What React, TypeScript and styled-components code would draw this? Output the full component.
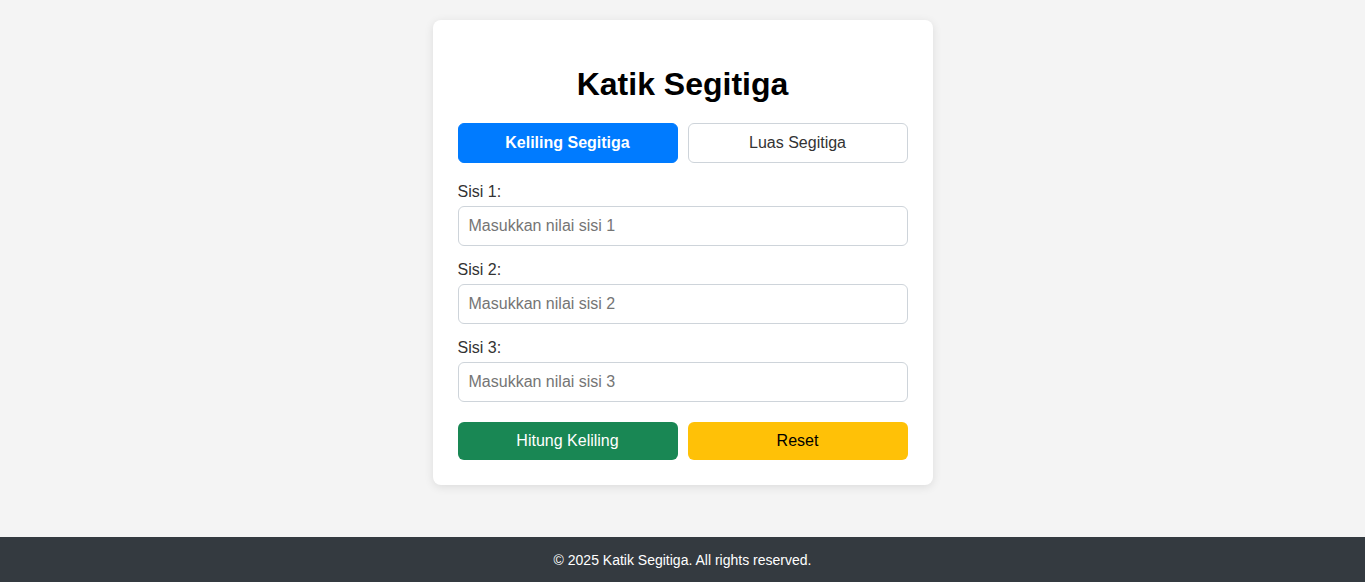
import React, { useState } from "react";
import styled, { createGlobalStyle } from "styled-components";

const GlobalStyle = createGlobalStyle`
  * { box-sizing: border-box; }
  html, body { margin: 0; padding: 0; }
  body {
    background: #f4f4f4;
    font-family: "Liberation Sans", Arial, sans-serif;
    color: #333;
  }
`;

const Page = styled.div`
  min-height: 100vh;
  display: flex;
  flex-direction: column;
`;

const Main = styled.main`
  flex: 1;
  display: flex;
  justify-content: center;
  align-items: flex-start;
  padding-top: 20px;
`;

const Card = styled.div`
  width: 500px;
  background: #fff;
  border-radius: 8px;
  box-shadow: 0 2px 10px rgba(0, 0, 0, 0.1);
  padding: 25px;
`;

const Title = styled.h1`
  margin: 21px 0 20px;
  font-size: 32px;
  line-height: 37px;
  font-weight: 700;
  color: #000;
  text-align: center;
`;

const Row = styled.div<{ $mt?: number }>`
  display: grid;
  grid-template-columns: 1fr 1fr;
  gap: 10px;
  margin-top: ${(p) => p.$mt ?? 0}px;
`;

const Tab = styled.button<{ $active?: boolean }>`
  height: 40px;
  border-radius: 6px;
  font-family: inherit;
  font-size: 16px;
  cursor: pointer;
  border: 1px solid ${(p) => (p.$active ? "#007bff" : "#ced4da")};
  background: ${(p) => (p.$active ? "#007bff" : "#fff")};
  color: ${(p) => (p.$active ? "#fff" : "#333")};
  font-weight: ${(p) => (p.$active ? 700 : 400)};
`;

const Form = styled.div`
  margin-top: 20px;
`;

const Group = styled.div`
  margin-bottom: 15px;
`;

const Label = styled.label`
  display: block;
  font-size: 16px;
  line-height: 18px;
  margin-bottom: 5px;
  color: #333;
`;

const Input = styled.input`
  display: block;
  width: 100%;
  height: 40px;
  padding: 0 10px;
  border: 1px solid #ced4da;
  border-radius: 6px;
  font-family: inherit;
  font-size: 16px;
  color: #333;
  outline: none;
  &::placeholder { color: #757575; }
`;

const ActionButton = styled.button<{ $bg: string; $fg: string }>`
  height: 38px;
  border: none;
  border-radius: 6px;
  font-family: inherit;
  font-size: 16px;
  background: ${(p) => p.$bg};
  color: ${(p) => p.$fg};
  cursor: pointer;
`;

const Footer = styled.footer`
  height: 45px;
  background: #343a40;
  color: #fff;
  font-size: 14px;
  display: flex;
  align-items: center;
  justify-content: center;
`;

export default function App() {
  const [tab, setTab] = useState<"keliling" | "luas">("keliling");
  return (
    <Page>
      <GlobalStyle />
      <Main>
        <Card>
          <Title>Katik Segitiga</Title>
          <Row>
            <Tab $active={tab === "keliling"} onClick={() => setTab("keliling")}>
              Keliling Segitiga
            </Tab>
            <Tab $active={tab === "luas"} onClick={() => setTab("luas")}>
              Luas Segitiga
            </Tab>
          </Row>
          <Form>
            {[1, 2, 3].map((n) => (
              <Group key={n}>
                <Label htmlFor={`sisi${n}`}>Sisi {n}:</Label>
                <Input id={`sisi${n}`} type="number" placeholder={`Masukkan nilai sisi ${n}`} />
              </Group>
            ))}
            <Row $mt={20}>
              <ActionButton $bg="#198754" $fg="#fff">Hitung Keliling</ActionButton>
              <ActionButton $bg="#ffc107" $fg="#000">Reset</ActionButton>
            </Row>
          </Form>
        </Card>
      </Main>
      <Footer>© 2025 Katik Segitiga. All rights reserved.</Footer>
    </Page>
  );
}
